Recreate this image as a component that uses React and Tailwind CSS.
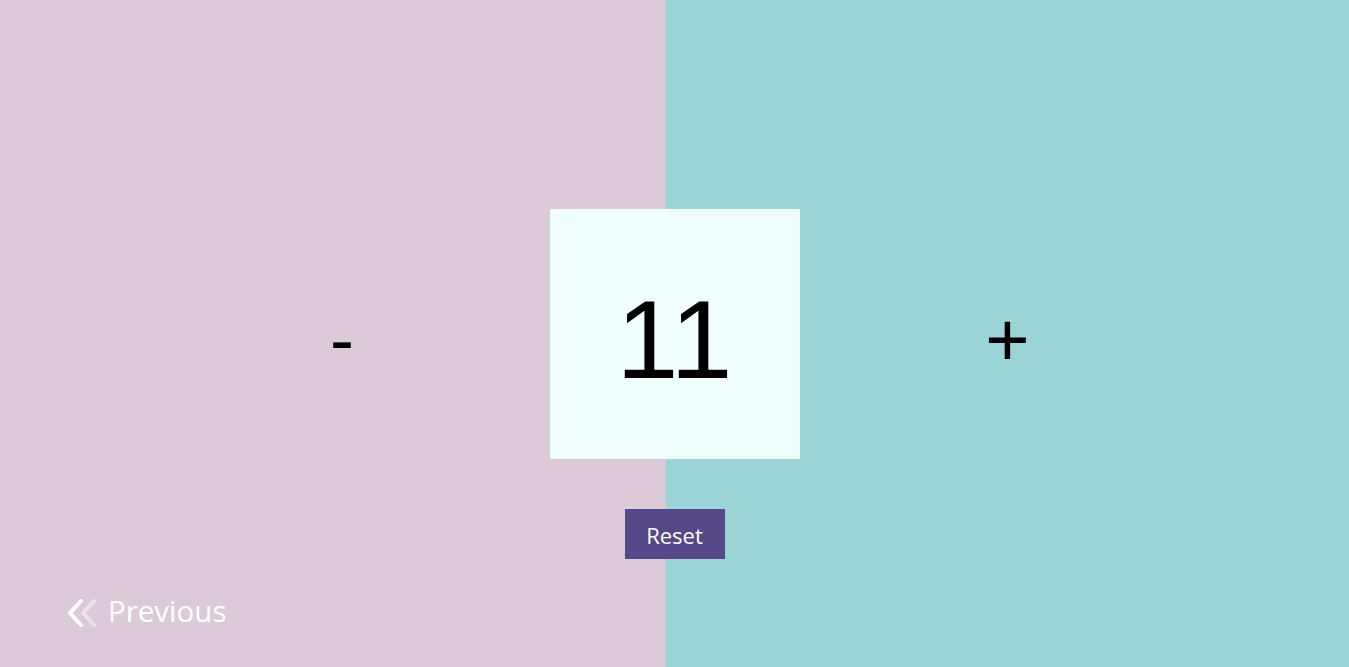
import React, { useState } from 'react';

function App() {
  const [count, setCount] = useState(11);

  return (
    <div className="relative flex h-screen w-full overflow-hidden" style={{ fontFamily: '"Open Sans", "Noto Sans", sans-serif' }}>
      <button
        onClick={() => setCount(c => c - 1)}
        className="relative flex w-[666px] items-center justify-center bg-[#dccad9] text-black"
      >
        <span className="ml-[18px] mt-[10px] text-[72px] leading-none" style={{ fontFamily: '"Liberation Sans", Arial, sans-serif' }}>-</span>
        <span className="absolute bottom-[40px] left-[68px] flex items-center gap-[10px] text-[29.5px] leading-none text-white">
          <svg width="30" height="28" viewBox="0 0 30 28" fill="none" stroke="white" strokeWidth="4" strokeLinecap="round" strokeLinejoin="round">
            <path d="M26 2 L15 14 L26 26" opacity="0.45" />
            <path d="M13 2 L2 14 L13 26" />
          </svg>
          <span className="-mt-[4px]">Previous</span>
        </span>
      </button>
      <button
        onClick={() => setCount(c => c + 1)}
        className="flex flex-1 items-center justify-center bg-[#9bd4d6] text-black"
      >
        <span className="mt-[12px] text-[76px] leading-none" style={{ fontFamily: '"Liberation Sans", Arial, sans-serif' }}>+</span>
      </button>

      <div className="absolute left-1/2 top-1/2 flex -translate-x-1/2 -translate-y-[125px] flex-col items-center gap-[50px]">
        <div className="flex h-[250px] w-[250px] items-center justify-center bg-[#f0fffe]">
          <span className="mt-[12px] text-[112px] leading-none text-black" style={{ fontFamily: '"Liberation Sans", Arial, sans-serif' }}>{count}</span>
        </div>
        <button
          onClick={() => setCount(0)}
          className="flex h-[50px] w-[100px] items-center justify-center bg-[#574889] text-[22px] text-white"
        >
          <span className="mt-[4px]">Reset</span>
        </button>
      </div>
    </div>
  );
}

export default App;
